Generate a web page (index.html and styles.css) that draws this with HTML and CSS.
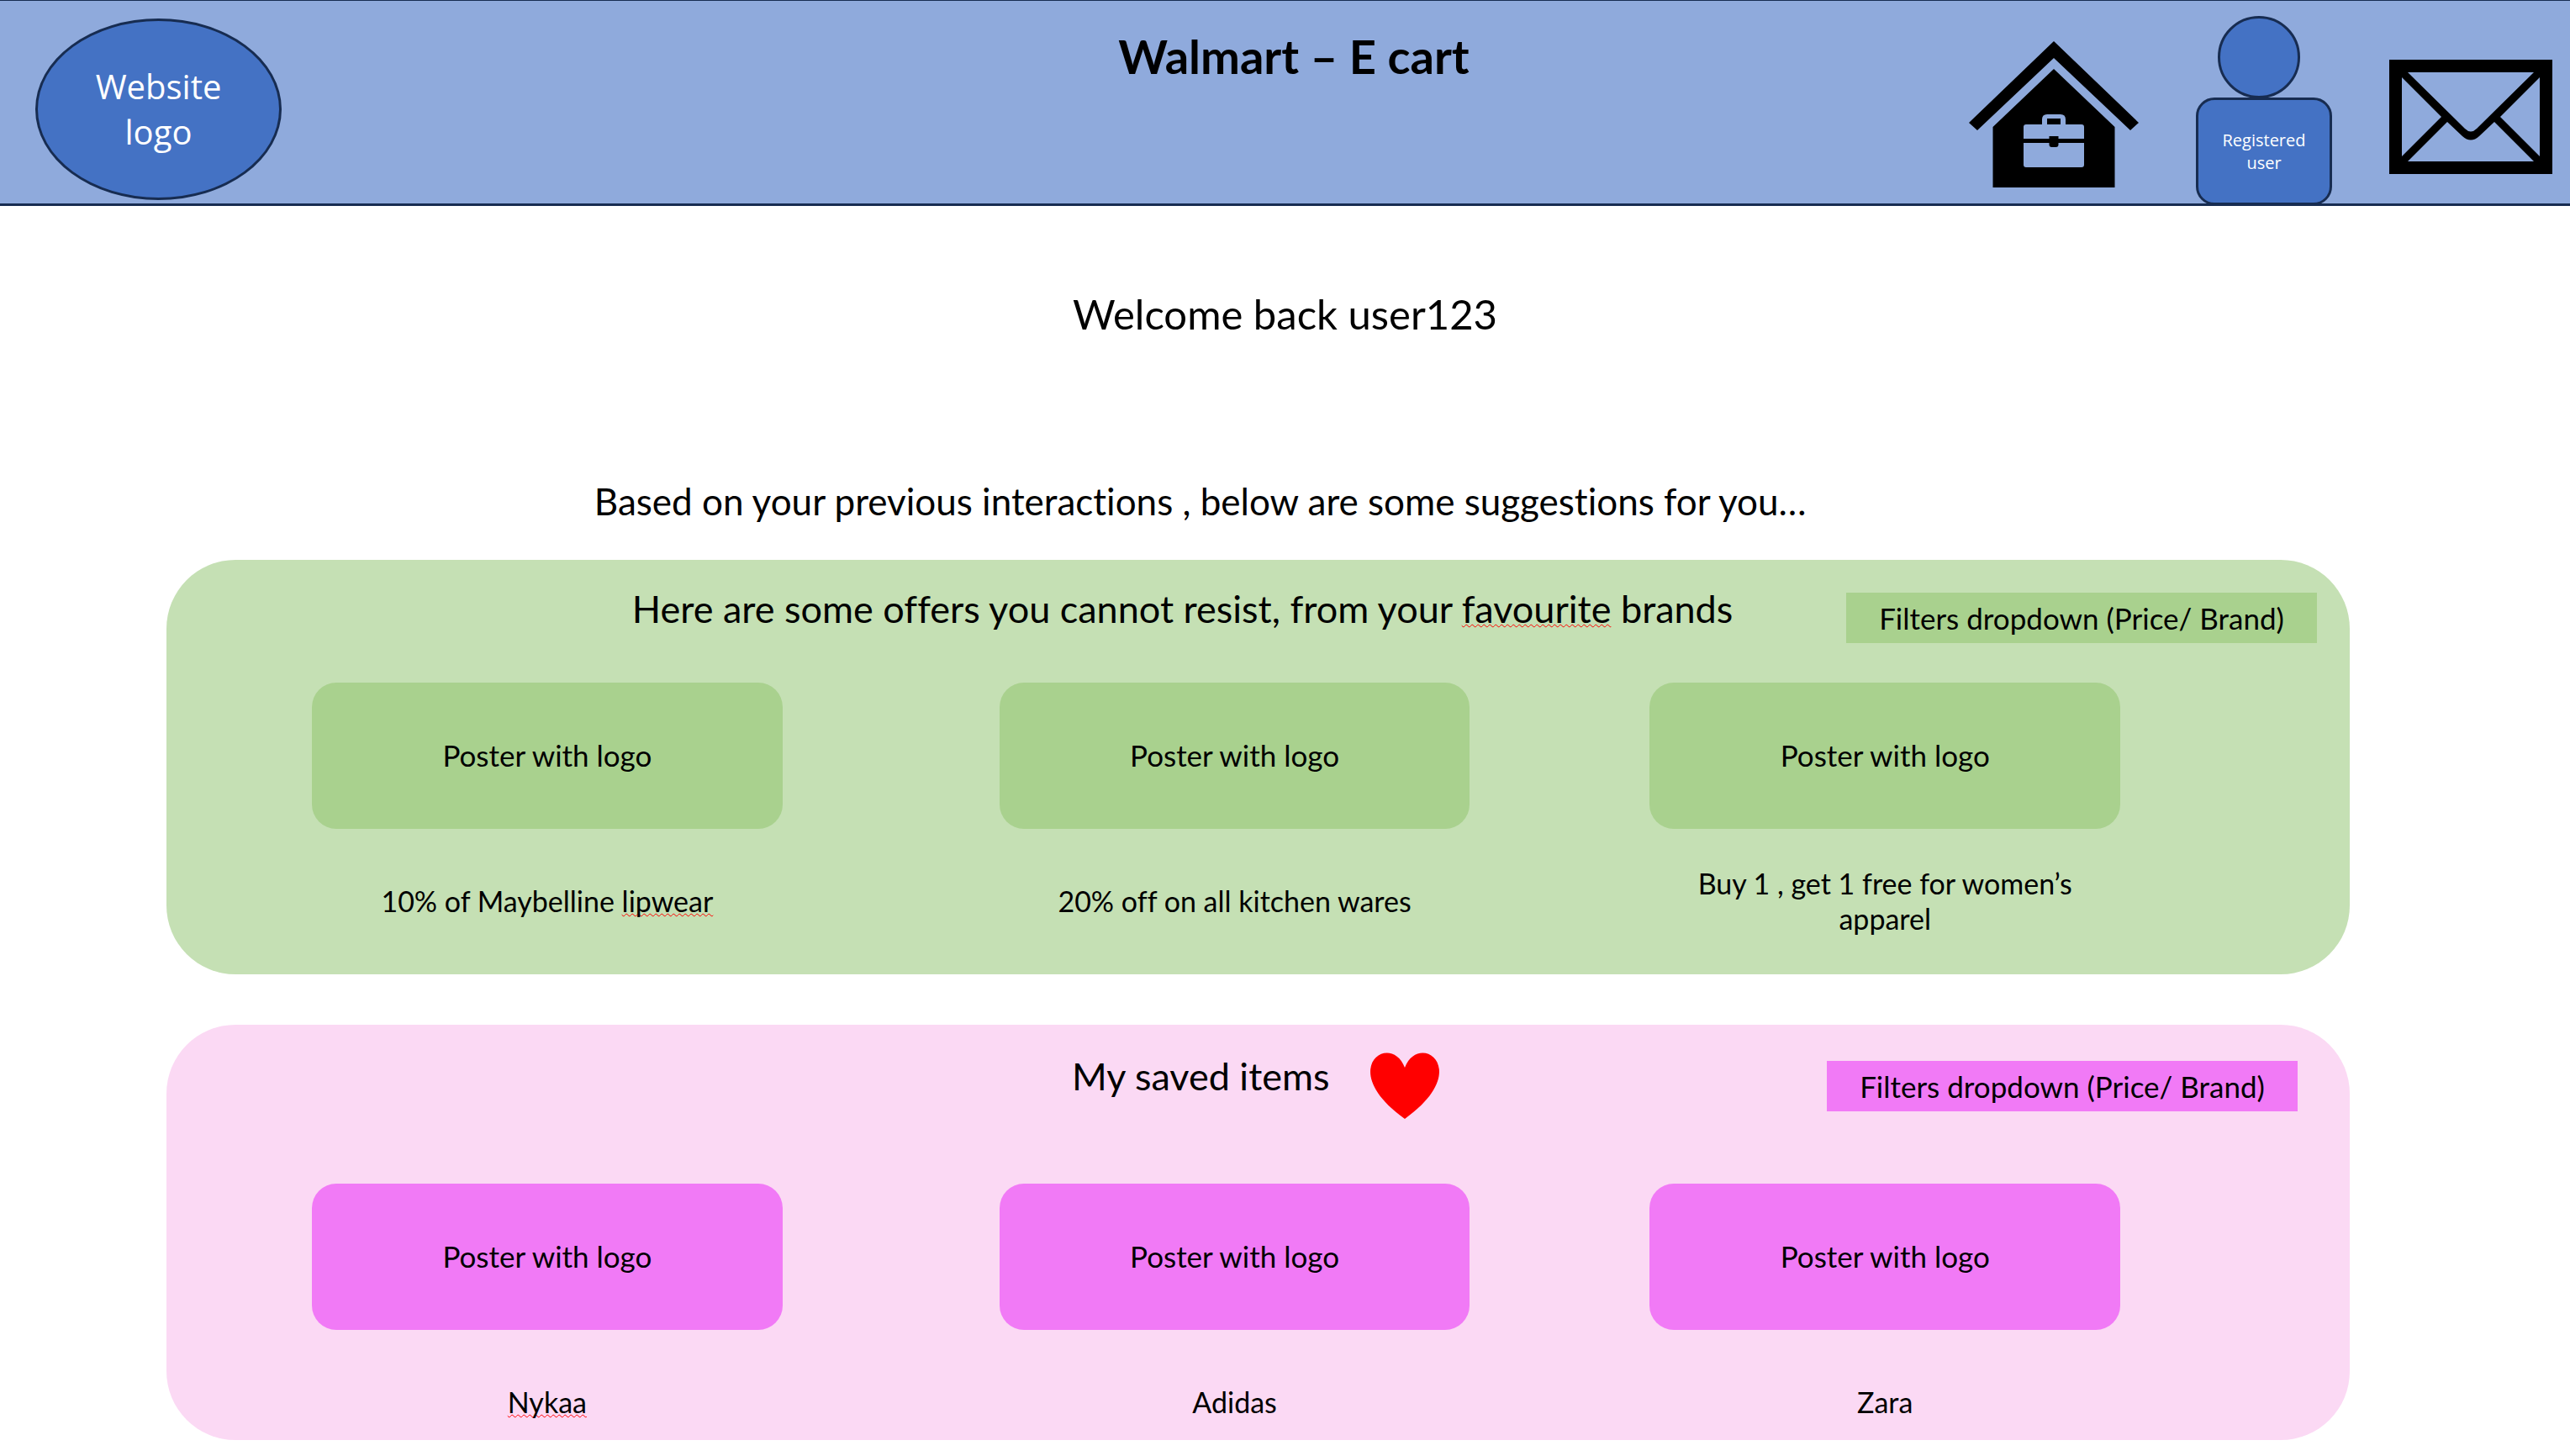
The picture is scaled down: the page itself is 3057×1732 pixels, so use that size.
FILE: index.html
```html
<!DOCTYPE html>
<html lang="en">
<head>
<meta charset="utf-8">
<title>Walmart – E cart</title>
<link rel="stylesheet" href="styles.css">
</head>
<body>
<header class="topbar">
  <a class="logo" href="#">Website<br>logo</a>
  <h1 class="title">Walmart – E cart</h1>
  <nav class="actions">
    <a class="home" href="#" aria-label="Home">
      <svg width="202" height="174" viewBox="0 0 202 174">
        <path d="M101 0L202 97L192 106L101 20L10 106L0 97Z"/>
        <path fill-rule="evenodd" d="M101 33L173.500 102V174H28.500V102ZM93 87Q87 87 87 93V99H68Q65 99 65 102V116H95.500V113H106.500V116H137V102Q137 99 134 99H115V93Q115 87 109 87ZM93 99V92H109V99ZM65 121V147Q65 150 68 150H134Q137 150 137 147V121H106.500V123Q106.500 126 103.500 126H98.500Q95.500 126 95.500 123V121Z"/>
      </svg>
    </a>
    <a class="user" href="#">
      <span class="user-head"></span>
      <span class="user-body">Registered<br>user</span>
    </a>
    <a class="mail" href="#" aria-label="Messages">
      <svg width="194" height="136" viewBox="0 0 194 136">
        <path fill-rule="evenodd" d="M0 0H194V136H0ZM22 15L90 82Q97 89 104 82L172 15ZM15 21V115L62 68ZM179 21L132 68L179 115ZM22 121H172L125 74L107 91Q97 100 87 91L69 74Z"/>
      </svg>
    </a>
  </nav>
</header>
<main>
  <h2 class="welcome">Welcome back user123</h2>
  <p class="intro">Based on your previous interactions , below are some suggestions for you…</p>

  <section class="panel offers">
    <div class="panel-head">
      <h3 class="heading">Here are some offers you cannot resist, from your <span class="typo">favourite</span> brands</h3>
      <select class="filter" aria-label="Filter offers"><option>Filters dropdown (Price/ Brand)</option></select>
    </div>
    <div class="cards">
      <article class="card"><div class="poster">Poster with logo</div><p class="caption"><span>10% of Maybelline <span class="typo">lipwear</span></span></p></article>
      <article class="card"><div class="poster">Poster with logo</div><p class="caption">20% off on all kitchen wares</p></article>
      <article class="card"><div class="poster">Poster with logo</div><p class="caption">Buy 1 , get 1 free for women’s apparel</p></article>
    </div>
  </section>

  <section class="panel saved">
    <div class="panel-head">
      <h3 class="heading">My saved items
        <svg class="heart" width="82" height="78" viewBox="0 0 82 78"><path d="M41 17C58 -27 124 19 41 78C-42 19 24 -27 41 17Z"/></svg>
      </h3>
      <select class="filter" aria-label="Filter saved items"><option>Filters dropdown (Price/ Brand)</option></select>
    </div>
    <div class="cards">
      <article class="card"><div class="poster">Poster with logo</div><p class="caption"><span class="typo">Nykaa</span></p></article>
      <article class="card"><div class="poster">Poster with logo</div><p class="caption">Adidas</p></article>
      <article class="card"><div class="poster">Poster with logo</div><p class="caption">Zara</p></article>
    </div>
  </section>
</main>
</body>
</html>
```

FILE: styles.css
```css
* {
  box-sizing: border-box;
}

body {
  margin: 0;
  background: #fff;
  color: #000;
  font-family: Lato, "Open Sans", sans-serif;
  font-size: 35px;
  font-variant-ligatures: none;
  line-height: 42px;
}

h1, h2, h3, p {
  margin: 0;
  font-weight: 400;
}

a {
  color: inherit;
  text-decoration: none;
}

svg {
  display: block;
}

/* Top bar */
.topbar {
  display: grid;
  grid-template-columns: 1fr auto 1fr;
  align-items: start;
  padding: 0 21px 0 42px;
  background: #8faadc;
  border-top: 1px solid #172c51;
  border-bottom: 3px solid #172c51;
}

.logo {
  display: flex;
  align-items: center;
  justify-content: center;
  width: 293px;
  height: 216px;
  margin: 21px 0 4px;
  border: 3px solid #172c51;
  border-radius: 50%;
  background: #4472c4;
  color: #fff;
  font-family: "Open Sans", sans-serif;
  font-size: 40px;
  line-height: 54px;
  text-align: center;
}

.title {
  margin-top: 30px;
  font-size: 56px;
  line-height: 72px;
  font-weight: 700;
}

.actions {
  display: flex;
  justify-content: flex-end;
  gap: 68px;
}

.home {
  margin-top: 48px;
}

.mail {
  margin-top: 70px;
}

.user {
  display: flex;
  flex-direction: column;
  align-items: center;
  width: 162px;
  margin-top: 18px;
}

.user-head {
  width: 98px;
  height: 98px;
  margin-right: 12px;
  border: 3px solid #172c51;
  border-radius: 50%;
  background: #4472c4;
}

.user-body {
  display: flex;
  align-items: center;
  justify-content: center;
  width: 100%;
  height: 128px;
  margin: -1px 0 -2px;
  border: 3px solid #172c51;
  border-radius: 22px;
  background: #4472c4;
  color: #fff;
  font-family: "Open Sans", sans-serif;
  font-size: 20px;
  line-height: 27px;
  text-align: center;
}

/* Greeting */
.welcome {
  margin-top: 92px;
  font-size: 49px;
  line-height: 72px;
  text-align: center;
}

.intro {
  margin-top: 160px;
  padding-right: 6.6%;
  font-size: 44px;
  line-height: 54px;
  text-align: center;
}

/* Panels */
.panel {
  margin: 0 8.57% 60px 6.48%;
  border-radius: 82px;
}

.panel-head {
  display: grid;
  align-items: start;
}

.heading {
  display: flex;
  grid-column: 2;
  justify-content: center;
  font-size: 45px;
  line-height: 54px;
  white-space: pre;
}

.filter {
  grid-column: 4;
  width: 100%;
  height: 60px;
  padding: 0;
  border: 0;
  border-radius: 0;
  appearance: none;
  color: inherit;
  font: inherit;
  text-align: center;
  text-align-last: center;
}

.cards {
  display: grid;
  grid-template-columns: 173fr 560fr 258fr 560fr 214fr 560fr 273fr;
}

.card:nth-child(1) { grid-column: 2; }
.card:nth-child(2) { grid-column: 4; }
.card:nth-child(3) { grid-column: 6; }

.poster {
  display: flex;
  align-items: center;
  justify-content: center;
  height: 174px;
  padding-bottom: 2px;
  border-radius: 29px;
}

.caption {
  display: flex;
  align-items: center;
  justify-content: center;
  height: 84px;
  margin: 44px 40px 0;
  font-size: 34px;
  text-align: center;
}

.typo {
  text-decoration: underline wavy #f00 1px;
  text-decoration-skip-ink: none;
}

.offers {
  margin-top: 43px;
  padding-bottom: 45px;
  background: #c5e0b4;
}

.offers .panel-head {
  grid-template-columns: 561fr minmax(0, 1295fr) 142fr 560fr 39fr;
  padding: 31px 0 47px;
}

.offers .filter,
.offers .poster {
  background: #a9d18e;
}

.offers .filter {
  margin-top: 8px;
}

.saved {
  margin-bottom: 17px;
  padding-bottom: 3px;
  background: #fbd9f4;
}

.saved .panel-head {
  grid-template-columns: 1077fr 437fr 461fr 560fr 62fr;
  padding: 34px 0 47px;
}

.saved .heading {
  justify-content: space-between;
}

.saved .filter {
  margin-top: 9px;
}

.saved .filter,
.saved .poster {
  background: #f17af6;
}

.heart {
  overflow: visible;
  fill: #f00;
}
```
